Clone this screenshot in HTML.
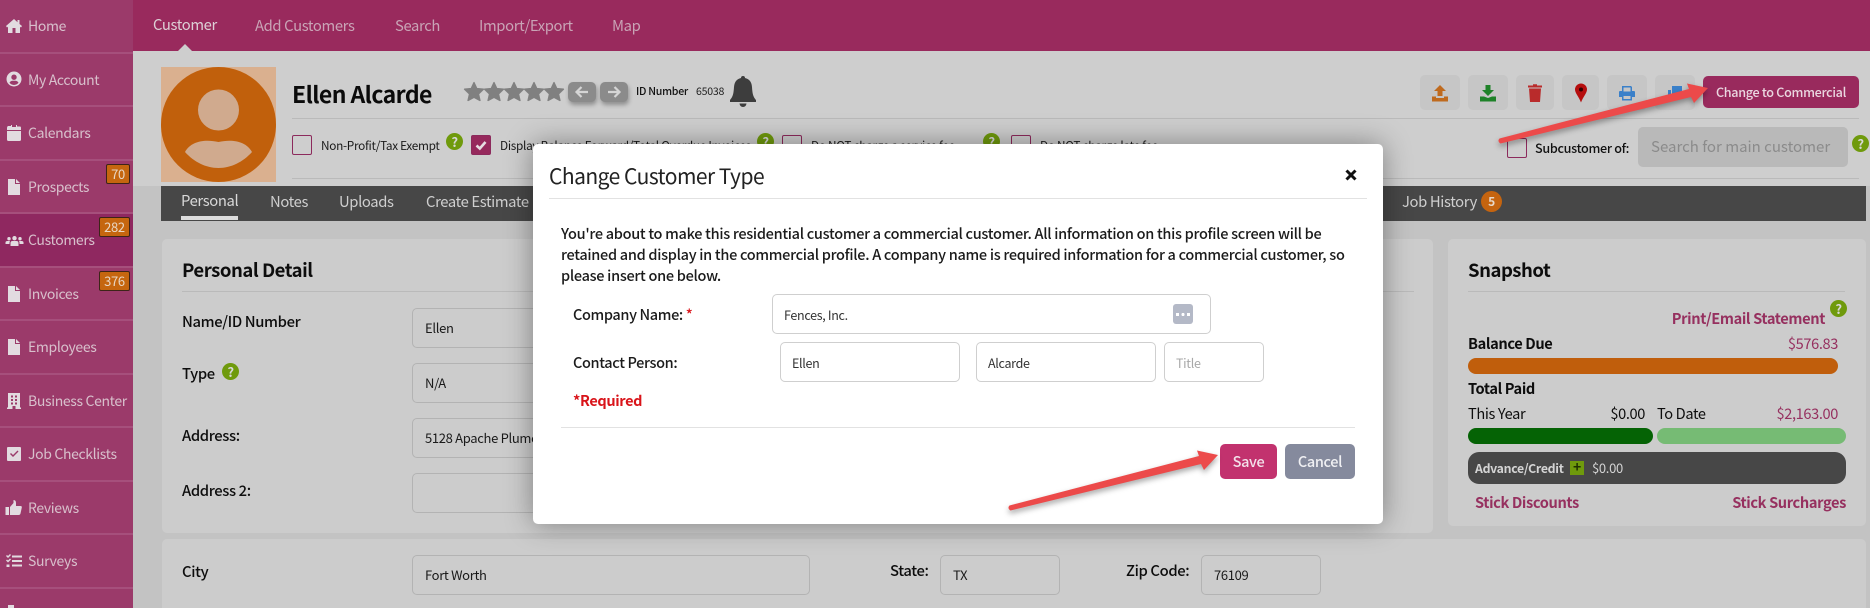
<!DOCTYPE html>
<html><head><meta charset="utf-8"><title>Change Customer Type</title>
<style>
*{box-sizing:border-box;letter-spacing:-.025em}
html{width:1870px;height:608px;overflow:hidden}
html,body{margin:0;padding:0}
body{width:1870px;height:608px;overflow:hidden;position:relative;background:#c3c3c3;font-family:"Noto Sans CJK SC","Liberation Sans",sans-serif;color:#0d0d0d;font-size:15px}
.a{position:absolute}
.t{position:absolute;white-space:nowrap;line-height:20px}
.side{left:0;top:0;width:133px;height:608px;background:#9b3a6a}
.sep{position:absolute;left:0;width:133px;height:2px;background:#a64f7c}
.sl{position:absolute;left:28px;color:#d8c0cc;font-size:14px;line-height:20px;white-space:nowrap}
.si{position:absolute;left:5px;width:18px;height:18px;fill:#e2dbe0}
.bd{position:absolute;height:20px;background:#c5660f;border:1px solid #3d2418;border-radius:2px;color:#e8d6c4;font-size:13px;line-height:18px;text-align:center}
.nav{position:absolute;top:15.5px;line-height:20px;font-size:14.8px;color:#c9a4b6;white-space:nowrap}
.tab{position:absolute;top:192px;color:#cfcfcf;font-size:14.8px;line-height:20px;white-space:nowrap}
.hr{position:absolute;height:1px;background:#bababa}
.cb{position:absolute;width:20px;height:20px;border:1px solid #8c2a5c;border-radius:2px}
.help{position:absolute;width:17px;height:17px;border-radius:50%;background:#6f9a0c;color:#d8d8d8;font-size:13px;line-height:17px;text-align:center;font-weight:700}
.ab{position:absolute;top:75px;height:35px;background:#c6c6c6;border-radius:5px}
.ab svg{position:absolute;left:50%;top:50%;transform:translate(-50%,-50%)}
.panel{position:absolute;background:#cccccc;border-radius:5px}
.inp{position:absolute;height:40px;border:1px solid #b3b3b3;border-radius:5px;font-size:13px;line-height:38px;padding:0 12px;color:#1a1a1a;white-space:nowrap;overflow:hidden}
.lb{position:absolute;font-size:14.8px;line-height:20px;white-space:nowrap;color:#0d0d0d}
.h{font-weight:700;font-size:18.5px;line-height:26px;position:absolute;white-space:nowrap;color:#0d0d0d}
.link{color:#96305f;font-weight:700;font-size:14.6px;position:absolute;line-height:20px;white-space:nowrap}
.modal{position:absolute;left:533px;top:144px;width:850px;height:380px;background:#fff;border-radius:5px;box-shadow:0 0 28px rgba(0,0,0,.38)}
.mi{position:absolute;height:40px;border:1px solid #cfcfcf;border-radius:5px;background:#fff;font-size:12.5px;line-height:38px;padding:1px 11px 0;color:#333;white-space:nowrap}
.ml{position:absolute;font-size:14.5px;line-height:20px;white-space:nowrap;color:#1b1b1b;font-weight:500}
</style></head><body>

<div class="a" style="left:133px;top:51px;width:1737px;height:135px;background:#cecece"></div>
<div class="a" style="left:133px;top:0;width:1737px;height:51px;background:#992a5d"></div>
<div class="a" style="left:178px;top:44px;width:0;height:0;border-left:7px solid transparent;border-right:7px solid transparent;border-bottom:7px solid #cecece"></div>
<div class="nav" style="left:153px;color:#ddd0d6;top:15px">Customer</div>
<div class="nav" style="left:255px">Add Customers</div>
<div class="nav" style="left:395px">Search</div>
<div class="nav" style="left:479px">Import/Export</div>
<div class="nav" style="left:612px">Map</div>

<div class="a side"></div>
<div class="a" style="left:0;top:214px;width:133px;height:52px;background:#8f2860"></div>
<div class="sep" style="top:52px"></div><div class="sep" style="top:105px"></div><div class="sep" style="top:159px"></div><div class="sep" style="top:212px"></div><div class="sep" style="top:266px"></div><div class="sep" style="top:319px"></div><div class="sep" style="top:373px"></div><div class="sep" style="top:426px"></div><div class="sep" style="top:480px"></div><div class="sep" style="top:533px"></div><div class="sep" style="top:587px"></div>

<svg class="si" style="top:17px" viewBox="0 0 18 18"><path d="M9 2 L1 9 L2 10.500 L3 9.800 V16 H7.500 V11 H10.500 V16 H15 V9.800 L16 10.500 L17 9 L14.500 7 V3 H12.500 V5.200Z"/></svg>
<div class="sl" style="top:16px">Home</div>
<svg class="si" style="top:70px" viewBox="0 0 18 18"><path fill-rule="evenodd" d="M9 1.500a7.500 7.500 0 1 0 0 15a7.500 7.500 0 0 0 0-15zM9 4.500a2.700 2.700 0 1 1 0 5.400a2.700 2.700 0 0 1 0-5.400zM4.500 12.800c.8-1.500 2-2 3-2h3c1 0 2.200.5 3 2c-1 1.400-2.700 2.200-4.500 2.200s-3.500-.8-4.500-2.200z"/></svg>
<div class="sl" style="top:70px">My Account</div>
<svg class="si" style="top:124px" viewBox="0 0 18 18"><path d="M3 2 H6 V1 H7 V3 H11 V1 H12 V2.500 H15 Q16 2.500 16 4 V6 H2 V4 Q2 2.500 3 2ZM2 7 H16 V15.500 Q16 17 14.500 17 H3.500 Q2 17 2 15.500Z"/></svg>
<div class="sl" style="top:123px">Calendars</div>
<svg class="si" style="top:178px" viewBox="0 0 18 18"><path d="M3 1 H10 V6 H15 V17 H3ZM11 1 L15 5 H11Z"/></svg>
<div class="sl" style="top:177px">Prospects</div>
<svg class="si" style="top:231px;width:19px" viewBox="0 0 18 18"><path d="M9 5a2.200 2.200 0 1 1 0 4.400a2.200 2.200 0 0 1 0-4.400zM3.500 6a1.700 1.700 0 1 1 0 3.400a1.700 1.700 0 0 1 0-3.400zM14.500 6a1.700 1.700 0 1 1 0 3.400a1.700 1.700 0 0 1 0-3.400zM5 15 V12 Q5 10 7 10 H11 Q13 10 13 12 V15ZM0 13 V11.500 Q0 10 2 10 H4.500 Q4 11 4 12 V13ZM18 13 V11.500 Q18 10 16 10 H13.500 Q14 11 14 12 V13Z"/></svg>
<div class="sl" style="top:230px">Customers</div>
<svg class="si" style="top:285px" viewBox="0 0 18 18"><path d="M3 1 H10 V6 H15 V17 H3ZM11 1 L15 5 H11Z"/></svg>
<div class="sl" style="top:284px">Invoices</div>
<svg class="si" style="top:338px" viewBox="0 0 18 18"><path d="M3 1 H10 V6 H15 V17 H3ZM11 1 L15 5 H11Z"/></svg>
<div class="sl" style="top:337px">Employees</div>
<svg class="si" style="top:392px" viewBox="0 0 18 18"><path fill-rule="evenodd" d="M3 1 H15 V15.500 H16 V17 H2 V15.500 H3ZM6 3.500V5.500H8V3.500ZM10 3.500V5.500H12V3.500ZM6 7V9H8V7ZM10 7V9H12V7ZM6 10.500V12.500H8V10.500ZM10 10.500V12.500H12V10.500ZM7.500 14V17H10.500V14Z"/></svg>
<div class="sl" style="top:391px">Business Center</div>
<svg class="si" style="top:445px" viewBox="0 0 18 18"><path fill-rule="evenodd" d="M3 2 H15 Q16 2 16 3 V15 Q16 16 15 16 H3 Q2 16 2 15 V3 Q2 2 3 2ZM5 9 L8 12 L13.500 6.500 L12.500 5.500 L8 10 L6 8Z"/></svg>
<div class="sl" style="top:444px">Job Checklists</div>
<svg class="si" style="top:499px" viewBox="0 0 18 18"><path d="M0.500 8 H4 V16 H0.500ZM5 8 L8.500 4 V1 Q11 1 11 4 V7 H15.500 Q17 7 16.800 8.500 L15.500 14.500 Q15.200 16 13.500 16 H5Z"/></svg>
<div class="sl" style="top:498px">Reviews</div>
<svg class="si" style="top:552px" viewBox="0 0 18 18"><path d="M7 3.500H17V5.500H7ZM7 8H17V10H7ZM7 12.500H17V14.500H7ZM1 4L2 3L3 4L5 2L6 3L3 6ZM1 8.500L2 7.500L3 8.500L5 6.500L6 7.500L3 10.500ZM1.500 12.500H4.500V15H1.500Z"/></svg>
<div class="sl" style="top:551px">Surveys</div>
<div class="a" style="left:8px;top:605px;width:6px;height:3px;background:#e2dbe0"></div>

<div class="bd" style="left:106px;top:164px;width:24px">70</div>
<div class="bd" style="left:99px;top:217px;width:31px">282</div>
<div class="bd" style="left:99px;top:271px;width:31px">376</div>

<!-- avatar -->
<div class="a" style="left:161px;top:67px;width:115px;height:115px;background:#dab08f;overflow:hidden">
<svg width="115" height="115" viewBox="0 0 115 115"><circle cx="57.500" cy="57.500" r="57.500" fill="#c1600c"/><circle cx="57.500" cy="43" r="20.500" fill="#d0aa8e"/><path d="M24 85 C30 74 44 72 57.500 75 C71 72 85 74 91 85 C82 95 70 101 57.500 101 C45 101 33 95 24 85Z" fill="#d0aa8e"/></svg>
</div>

<div class="t" style="left:292px;top:79px;font-size:23px;line-height:28px;font-weight:700;color:#0b0b0b">Ellen Alcarde</div>
<svg class="a" style="left:463px;top:80px" width="102" height="24" viewBox="0 0 102 24" fill="#808080" stroke="#808080" stroke-width="1.300" stroke-linejoin="round">
<path id="s" d="M11 2.500 L13.800 8.500 L20.500 9.200 L15.500 14 L17 20.500 L11 17.300 L5 20.500 L6.500 14 L1.500 9.200 L8.200 8.500Z"/>
<use href="#s" x="20"/><use href="#s" x="40"/><use href="#s" x="60"/><use href="#s" x="80"/></svg>
<div class="a" style="left:568px;top:82px;width:28px;height:20px;background:#8b8b8b;border-radius:5px;box-shadow:1px 3px 4px rgba(0,0,0,.3)"></div>
<div class="a" style="left:600px;top:82px;width:28px;height:20px;background:#8b8b8b;border-radius:5px;box-shadow:1px 3px 4px rgba(0,0,0,.3)"></div>
<svg class="a" style="left:568px;top:82px" width="60" height="20" viewBox="0 0 60 20" fill="none" stroke="#d5d5d5" stroke-width="2.200"><path d="M20 10H9M13.500 5L8.500 10L13.500 15"/><path d="M40 10H51M46.500 5L51.500 10L46.500 15"/></svg>
<div class="t" style="left:636px;top:82px;font-size:10.600px;font-weight:500;color:#111">ID Number</div>
<div class="t" style="left:696px;top:82px;font-size:10.600px;color:#222">65038</div>
<svg class="a" style="left:729px;top:75px" width="28" height="33" viewBox="0 0 28 33" fill="#3d3d3d"><path d="M14 1 Q16 1 16 3 Q22.500 4.500 23 12 C23.500 20 24.500 22 27 25 V27 H1 V25 C3.500 22 4.500 20 5 12 Q5.500 4.500 12 3 Q12 1 14 1Z"/><path d="M10.500 28.500 H17.500 Q17 32 14 32 Q11 32 10.500 28.500Z"/></svg>

<div class="hr" style="left:292px;top:118px;width:1567px"></div>
<div class="hr" style="left:292px;top:178px;width:1567px"></div>

<div class="cb" style="left:292px;top:135px"></div>
<div class="t" style="left:321px;top:136px;font-size:11.800px;color:#1a1a1a">Non-Profit/Tax Exempt</div>
<div class="help" style="left:446px;top:133px">?</div>
<div class="cb" style="left:471px;top:135px;background:#96295c"><svg width="18" height="18" viewBox="0 0 18 18" fill="none" stroke="#e6dde2" stroke-width="2.600"><path d="M4.500 9.500L7.800 12.500L13.500 6"/></svg></div>
<div class="t" style="left:500px;top:136px;font-size:11.800px;color:#1a1a1a">Display Balance Forward/Total Overdue Invoices</div>
<div class="help" style="left:757px;top:133px">?</div>
<div class="cb" style="left:782px;top:135px"></div>
<div class="t" style="left:811px;top:136px;font-size:11.800px;color:#1a1a1a">Do NOT charge a service fee</div>
<div class="help" style="left:983px;top:133px">?</div>
<div class="cb" style="left:1011px;top:135px"></div>
<div class="t" style="left:1040px;top:136px;font-size:11.800px;color:#1a1a1a">Do NOT charge late fee</div>

<!-- action buttons -->
<div class="ab" style="left:1420px;width:40px"><svg width="16" height="18" viewBox="0 0 16 18" fill="#bf6a1e"><path d="M8 1L14 7H10.500V12H5.500V7H2ZM0 12.500H4V14H12V12.500H16V17.500H0Z"/></svg></div>
<div class="ab" style="left:1468px;width:40px"><svg width="16" height="18" viewBox="0 0 16 18" fill="#1e8228"><path d="M5.500 1H10.500V6H14L8 12L2 6H5.500ZM0 12.500H4L8 14L12 12.500H16V17.500H0Z"/></svg></div>
<div class="ab" style="left:1516px;width:38px"><svg width="14" height="19" viewBox="0 0 14 19" fill="#b92b2b"><path d="M0 2H5V0.800H9V2H14V4H0ZM1 5H13L12 18.500H2Z"/></svg></div>
<div class="ab" style="left:1562px;width:37px"><svg width="13" height="20" viewBox="0 0 13 20"><path d="M6.500 0.500A6 6 0 0 1 12.500 6.500C12.500 10 8.500 14 6.500 19.500C4.500 14 .5 10 .5 6.500A6 6 0 0 1 6.500 .5Z" fill="#b50e0e"/><circle cx="6.500" cy="6.500" r="2" fill="#300"/></svg></div>
<div class="ab" style="left:1607px;width:40px"><svg width="16" height="16" viewBox="0 0 16 16" fill="#3a80c9"><path fill-rule="evenodd" d="M3 1H12L13 2V6H15Q16 6 16 7V12H13V15.500H3V12H0V7Q0 6 1 6H3ZM4.500 2.500V6.500H11.500V2.500ZM4.500 11V14H11.500V11Z"/></svg></div>
<div class="ab" style="left:1655px;width:40px"><svg width="16" height="16" viewBox="0 0 16 16" fill="#3a80c9"><path d="M5 1H15V11H5ZM1 5H4V12H11V15H1Z"/></svg></div>
<div class="a" style="left:1703px;top:76px;width:156px;height:32px;background:#992a5d;border-radius:5px;color:#ead7e0;font-size:12.600px;font-weight:500;line-height:32px;text-align:center">Change to Commercial</div>

<div class="cb" style="left:1507px;top:138px"></div>
<div class="t" style="left:1535px;top:138px;font-size:12.600px;font-weight:500;color:#111">Subcustomer of:</div>
<div class="a" style="left:1638px;top:127px;width:210px;height:40px;background:#b9b9b9;border-radius:5px;color:#8b8b8b;font-size:15px;line-height:40px;padding-left:13px;white-space:nowrap;letter-spacing:0">Search for main customer</div>
<div class="help" style="left:1852px;top:135px">?</div>

<!-- tabs -->
<div class="a" style="left:161px;top:186px;width:1705px;height:35px;background:#474747"></div>
<div class="tab" style="left:181px;top:191px;color:#d8d8d8">Personal</div>
<div class="a" style="left:181px;top:216px;width:57px;height:4px;background:#dcdcdc"></div>
<div class="tab" style="left:270px">Notes</div>
<div class="tab" style="left:339px">Uploads</div>
<div class="tab" style="left:426px">Create Estimate</div>
<div class="tab" style="left:1402px">Job History</div>
<div class="a" style="left:1481px;top:191px;width:21px;height:21px;border-radius:50%;background:#c5640f;color:#e8d8c8;font-size:12px;font-weight:700;line-height:21px;text-align:center">5</div>

<!-- personal panel -->
<div class="panel" style="left:162px;top:239px;width:1271px;height:294px"></div>
<div class="h" style="left:182px;top:257px">Personal Detail</div>
<div class="hr" style="left:182px;top:291px;width:1232px"></div>
<div class="lb" style="left:182px;top:312px;font-weight:500">Name/ID Number</div>
<div class="inp" style="left:412px;top:308px;width:300px">Ellen</div>
<div class="lb" style="left:182px;top:364px;font-weight:500">Type</div>
<div class="help" style="left:222px;top:363px">?</div>
<div class="inp" style="left:412px;top:363px;width:300px">N/A</div>
<div class="lb" style="left:182px;top:426px;font-weight:500">Address:</div>
<div class="inp" style="left:412px;top:418px;width:300px">5128 Apache Plume</div>
<div class="lb" style="left:182px;top:481px;font-weight:500">Address 2:</div>
<div class="inp" style="left:412px;top:473px;width:300px"></div>

<!-- snapshot -->
<div class="panel" style="left:1448px;top:239px;width:418px;height:287px"></div>
<div class="h" style="left:1468px;top:257px">Snapshot</div>
<div class="hr" style="left:1468px;top:291px;width:377px"></div>
<div class="link" style="right:45px;top:309px">Print/Email Statement</div>
<div class="help" style="left:1830px;top:300px">?</div>
<div class="t" style="left:1468px;top:334px;font-weight:700;font-size:14.600px">Balance Due</div>
<div class="t" style="right:32px;top:334px;color:#96305f;font-size:14.600px">$576.83</div>
<div class="a" style="left:1468px;top:358px;width:370px;height:16px;border-radius:8px;background:#c05e0c"></div>
<div class="t" style="left:1468px;top:379px;font-weight:700;font-size:14.600px">Total Paid</div>
<div class="t" style="left:1468px;top:404px;font-size:14.600px">This Year</div>
<div class="t" style="right:225px;top:404px;font-size:14.600px">$0.00</div>
<div class="t" style="left:1657px;top:404px;font-size:14.600px">To Date</div>
<div class="t" style="right:32px;top:404px;color:#96305f;font-size:14.600px">$2,163.00</div>
<div class="a" style="left:1468px;top:428px;width:185px;height:16px;border-radius:8px;background:#056305"></div>
<div class="a" style="left:1657px;top:428px;width:189px;height:16px;border-radius:8px;background:#76bb74"></div>
<div class="a" style="left:1468px;top:452px;width:378px;height:32px;border-radius:11px;background:#474747"></div>
<div class="t" style="left:1475px;top:458px;font-size:12.300px;font-weight:700;color:#d4d4d4">Advance/Credit</div>
<div class="a" style="left:1570px;top:461px;width:14px;height:14px;background:#6f9a0c;color:#1e3000;font-size:14px;line-height:13px;text-align:center;font-weight:700">+</div>
<div class="t" style="left:1592px;top:458px;font-size:13px;color:#d4d4d4">$0.00</div>
<div class="link" style="left:1475px;top:493px">Stick Discounts</div>
<div class="link" style="right:24px;top:493px">Stick Surcharges</div>

<!-- address panel -->
<div class="panel" style="left:162px;top:539px;width:1704px;height:69px;border-radius:5px 5px 0 0"></div>
<div class="lb" style="left:182px;top:562px;font-weight:500">City</div>
<div class="inp" style="left:412px;top:555px;width:398px">Fort Worth</div>
<div class="lb" style="left:890px;top:561px;font-weight:500">State:</div>
<div class="inp" style="left:940px;top:555px;width:120px">TX</div>
<div class="lb" style="left:1126px;top:561px;font-weight:500">Zip Code:</div>
<div class="inp" style="left:1201px;top:555px;width:120px">76109</div>

<!-- modal -->
<div class="modal"></div>
<div class="t" style="left:549px;top:162px;font-size:21px;line-height:28px;color:#222">Change Customer Type</div>
<svg class="a" style="left:1345px;top:169px" width="12" height="12" viewBox="0 0 12 12" stroke="#111" stroke-width="3"><path d="M1.500 1.500L10.500 10.500M10.500 1.500L1.500 10.500"/></svg>
<div class="a" style="left:549px;top:198px;width:818px;height:1px;background:#e2e2e2"></div>
<div class="a" style="left:561px;top:223px;width:810px;font-size:14.500px;line-height:21px;color:#1b1b1b;font-weight:500;letter-spacing:-.02em;white-space:nowrap">You're about to make this residential customer a commercial customer. All information on this profile screen will be<br>retained and display in the commercial profile. A company name is required information for a commercial customer, so<br>please insert one below.</div>
<div class="ml" style="left:573px;top:305px">Company Name: <span style="color:#d9141a">*</span></div>
<div class="mi" style="left:772px;top:294px;width:439px">Fences, Inc.</div>
<div class="a" style="left:1173px;top:304px;width:20px;height:20px;background:#b4b9c7;border-radius:3px"><div class="a" style="left:3px;top:9px;width:14px;height:3px;border-left:3px dotted #fff;border-right:3px dotted #fff;background:radial-gradient(circle,#fff 1.500px,transparent 1.600px)"></div></div>
<div class="ml" style="left:573px;top:353px">Contact Person:</div>
<div class="mi" style="left:780px;top:342px;width:180px">Ellen</div>
<div class="mi" style="left:976px;top:342px;width:180px">Alcarde</div>
<div class="mi" style="left:1164px;top:342px;width:100px;color:#a8a8a8">Title</div>
<div class="ml" style="left:573px;top:391px;color:#d9141a;font-weight:700">*Required</div>
<div class="a" style="left:561px;top:427px;width:794px;height:1px;background:#e2e2e2"></div>
<div class="a" style="left:1220px;top:444px;width:57px;height:35px;background:#c2326e;border-radius:5px;color:#f3e2ea;font-size:14.500px;line-height:35px;text-align:center;font-weight:500">Save</div>
<div class="a" style="left:1285px;top:444px;width:70px;height:35px;background:#858a9d;border-radius:5px;color:#f0f0f3;font-size:14.500px;line-height:35px;text-align:center;font-weight:500">Cancel</div>

<!-- arrows -->
<svg class="a" style="left:0;top:0;filter:drop-shadow(0 3px 3px rgba(0,0,0,.35))" width="1870" height="608" viewBox="0 0 1870 608" fill="#ec4a4a">
<path d="M1499.500 138.500 L1689 89 L1687 83.500 L1708 88 L1694 103 L1691 97 L1500.500 143.500 Q1497 141 1499.500 138.500Z"/>
<path d="M1009.500 505.500 L1199 456 L1197 450.500 L1218 455 L1204 470 L1201 464 L1010.500 510.500 Q1007 508 1009.500 505.500Z"/>
</svg>
</body></html>
